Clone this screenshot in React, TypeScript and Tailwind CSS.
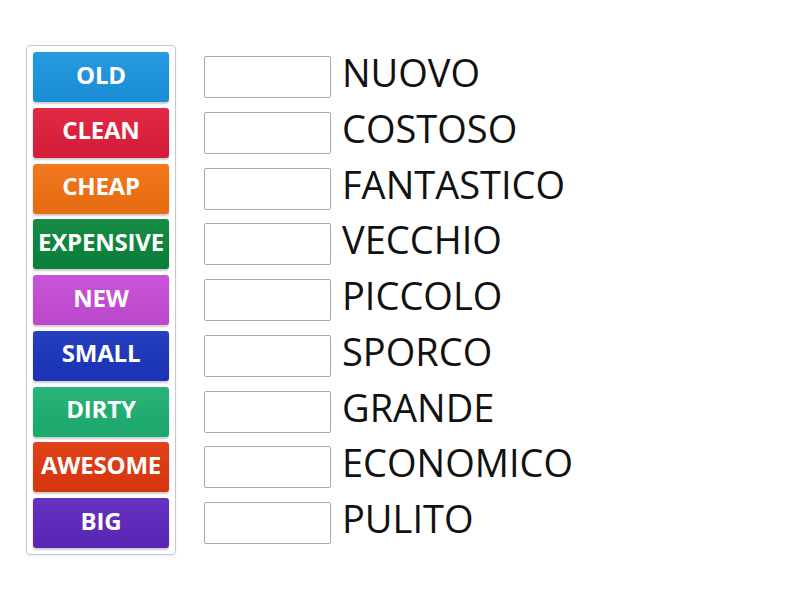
import React from "react";

const tiles = [
  { label: "OLD", color: "bg-[#1d95e0]" },
  { label: "CLEAN", color: "bg-[#e01f3d]" },
  { label: "CHEAP", color: "bg-[#f27213]" },
  { label: "EXPENSIVE", color: "bg-[#0b863d]" },
  { label: "NEW", color: "bg-[#c64cd6]" },
  { label: "SMALL", color: "bg-[#1c36bf]" },
  { label: "DIRTY", color: "bg-[#1eb173]" },
  { label: "AWESOME", color: "bg-[#e0390e]" },
  { label: "BIG", color: "bg-[#5f28bf]" },
];

const words = ["NUOVO", "COSTOSO", "FANTASTICO", "VECCHIO", "PICCOLO", "SPORCO", "GRANDE", "ECONOMICO", "PULITO"];

export default function App() {
  return (
    <div className="w-[800px] h-[600px] bg-white pt-[45px] pl-[26px] flex gap-[28px] font-['Open_Sans',sans-serif]">
      {/* Tile bank */}
      <div className="self-start border border-[#c8c8c8] rounded-[4px] p-[6px] flex flex-col gap-[5.75px] shadow-[0_1px_2px_rgba(0,0,0,0.08)]">
        {tiles.map(t => (
          <div
            key={t.label}
            className={`${t.color} w-[136px] h-[50px] rounded-[3px] flex items-center justify-center pb-[5px] text-white font-bold text-[24px] tracking-[-0.2px] shadow-[0_2px_2px_rgba(0,0,0,0.2)] bg-gradient-to-b from-white/5 to-black/5`}
          >
            {t.label}
          </div>
        ))}
      </div>

      {/* Answer rows */}
      <div className="flex flex-col gap-[5.75px] pt-[7px]">
        {words.map(w => (
          <div key={w} className="h-[50px] flex items-center gap-[11px]">
            <div className="w-[127px] h-[42px] border border-[#a9a9a9] rounded-[2px] bg-white" />
            <span className="text-[38px] text-[#111] leading-none -mt-[10px]">{w}</span>
          </div>
        ))}
      </div>
    </div>
  );
}
